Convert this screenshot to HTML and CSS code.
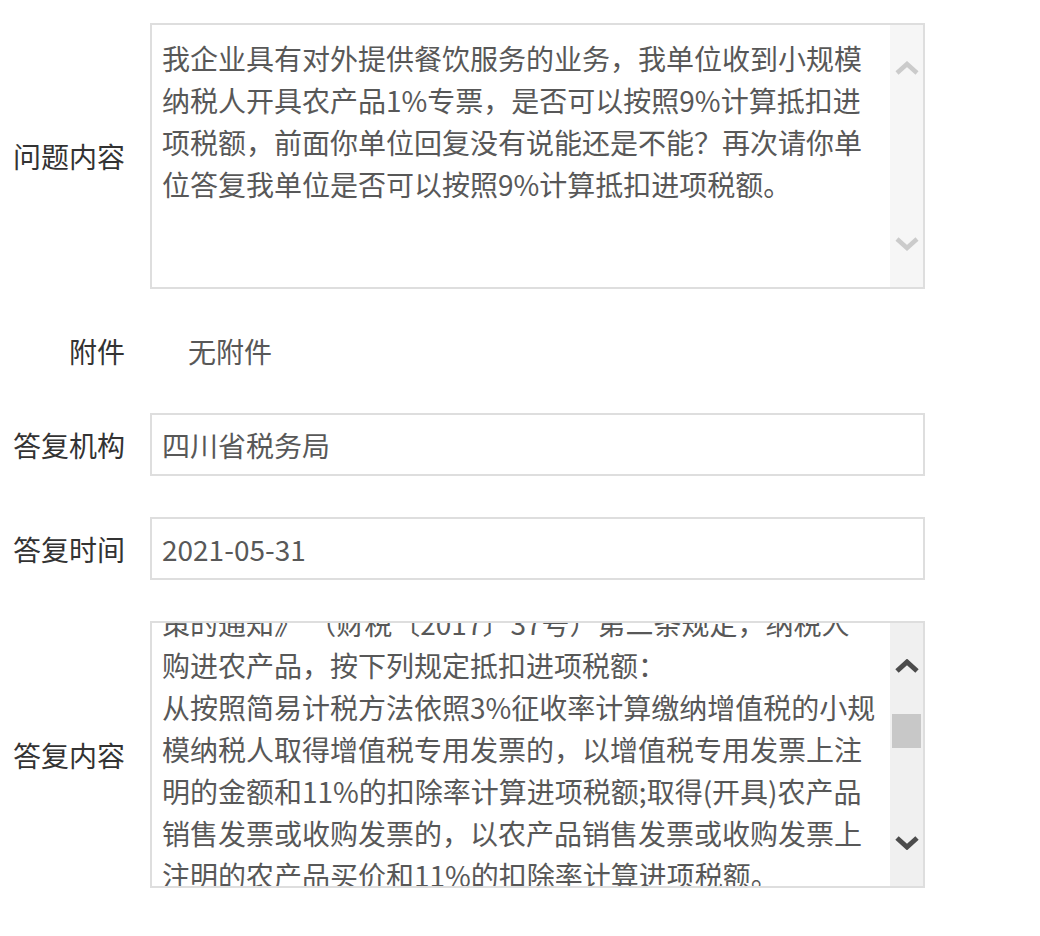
FILE: index.html
```
<!DOCTYPE html>
<html>

<head>
	<title>问题详情</title>
	<link rel="stylesheet" href="styles.css">
</head>

<body>
	<section class="form">
		<div class="row row-area">
			<p class="label">问题内容</p>
			<div class="box area">
				<div class="area-text">
					我企业具有对外提供餐饮服务的业务，我单位收到小规模<br>
					纳税人开具农产品1%专票，是否可以按照9%计算抵扣进<br>
					项税额，前面你单位回复没有说能还是不能？再次请你单<br>
					位答复我单位是否可以按照9%计算抵扣进项税额。
				</div>
				<div class="bar idle">
					<div class="arrow">
						<svg width="24" height="14" viewBox="0 0 24 14"><polyline points="2,12 12,3 22,12" /></svg>
					</div>
					<div class="track"></div>
					<div class="arrow">
						<svg width="24" height="14" viewBox="0 0 24 14"><polyline points="2,2 12,11 22,2" /></svg>
					</div>
				</div>
			</div>
		</div>

		<div class="row row-plain">
			<p class="label">附件</p>
			<p class="plain-value">无附件</p>
		</div>

		<div class="row">
			<p class="label">答复机构</p>
			<div class="box input">四川省税务局</div>
		</div>

		<div class="row">
			<p class="label">答复时间</p>
			<div class="box input">2021-05-31</div>
		</div>

		<div class="row row-area">
			<p class="label">答复内容</p>
			<div class="box area">
				<div class="area-text scrolled">
					策的通知》 （财税〔2017〕37号）第二条规定，纳税人<br>
					购进农产品，按下列规定抵扣进项税额：<br>
					从按照简易计税方法依照3%征收率计算缴纳增值税的小规<br>
					模纳税人取得增值税专用发票的，以增值税专用发票上注<br>
					明的金额和11%的扣除率计算进项税额;取得(开具)农产品<br>
					销售发票或收购发票的，以农产品销售发票或收购发票上<br>
					注明的农产品买价和11%的扣除率计算进项税额。
				</div>
				<div class="bar">
					<div class="arrow">
						<svg width="24" height="14" viewBox="0 0 24 14"><polyline points="2,12 12,3 22,12" /></svg>
					</div>
					<div class="track">
						<div class="thumb"></div>
					</div>
					<div class="arrow">
						<svg width="24" height="14" viewBox="0 0 24 14"><polyline points="2,2 12,11 22,2" /></svg>
					</div>
				</div>
			</div>
		</div>
	</section>
</body>

</html>
```

FILE: styles.css
```
body,
* {
	margin: 0;
	padding: 0;
	box-sizing: border-box;
}

body {
	background: #fff;
	font-family: "Microsoft YaHei", "Noto Sans CJK SC", "Noto Sans", sans-serif;
	font-size: 28px;
	color: #333;
}

.form {
	width: 925px;
	padding-top: 23px;
	display: flex;
	flex-direction: column;
	gap: 41px;
}

.row {
	display: flex;
	align-items: center;
	gap: 25px;
}

.label {
	width: 125px;
	flex-shrink: 0;
	text-align: right;
	color: #333;
	line-height: 42px;
}

.box {
	flex: 1;
	border: 2px solid #dedede;
	background: #fff;
	color: #585858;
}

.input {
	height: 63px;
	line-height: 42px;
	padding: 9px 10px;
}

.row-plain {
	height: 42px;
}

.plain-value {
	padding-left: 38px;
	color: #585858;
	line-height: 42px;
}

.area {
	height: 266px;
	display: flex;
	overflow: hidden;
}

.row-area:last-child .area {
	height: 267px;
}

.area-text {
	flex: 1;
	padding: 12px 0 12px 10px;
	line-height: 42px;
	white-space: nowrap;
	overflow: hidden;
}

.area-text.scrolled {
	padding-top: 0;
	margin-top: -21px;
}

.bar {
	width: 33px;
	flex-shrink: 0;
	display: flex;
	flex-direction: column;
	background: #f0f0f0;
}

.bar.idle {
	background: #f6f6f6;
}

.arrow {
	height: 86px;
	display: flex;
	align-items: center;
	justify-content: center;
}

.arrow svg polyline {
	fill: none;
	stroke: #4c4c4c;
	stroke-width: 5;
}

.bar.idle .arrow svg polyline {
	stroke: #cbcbcb;
	stroke-width: 4.5;
}

.track {
	flex: 1;
	padding: 5px 2px 0;
}

.thumb {
	height: 34px;
	background: #c8c8c8;
}
```
